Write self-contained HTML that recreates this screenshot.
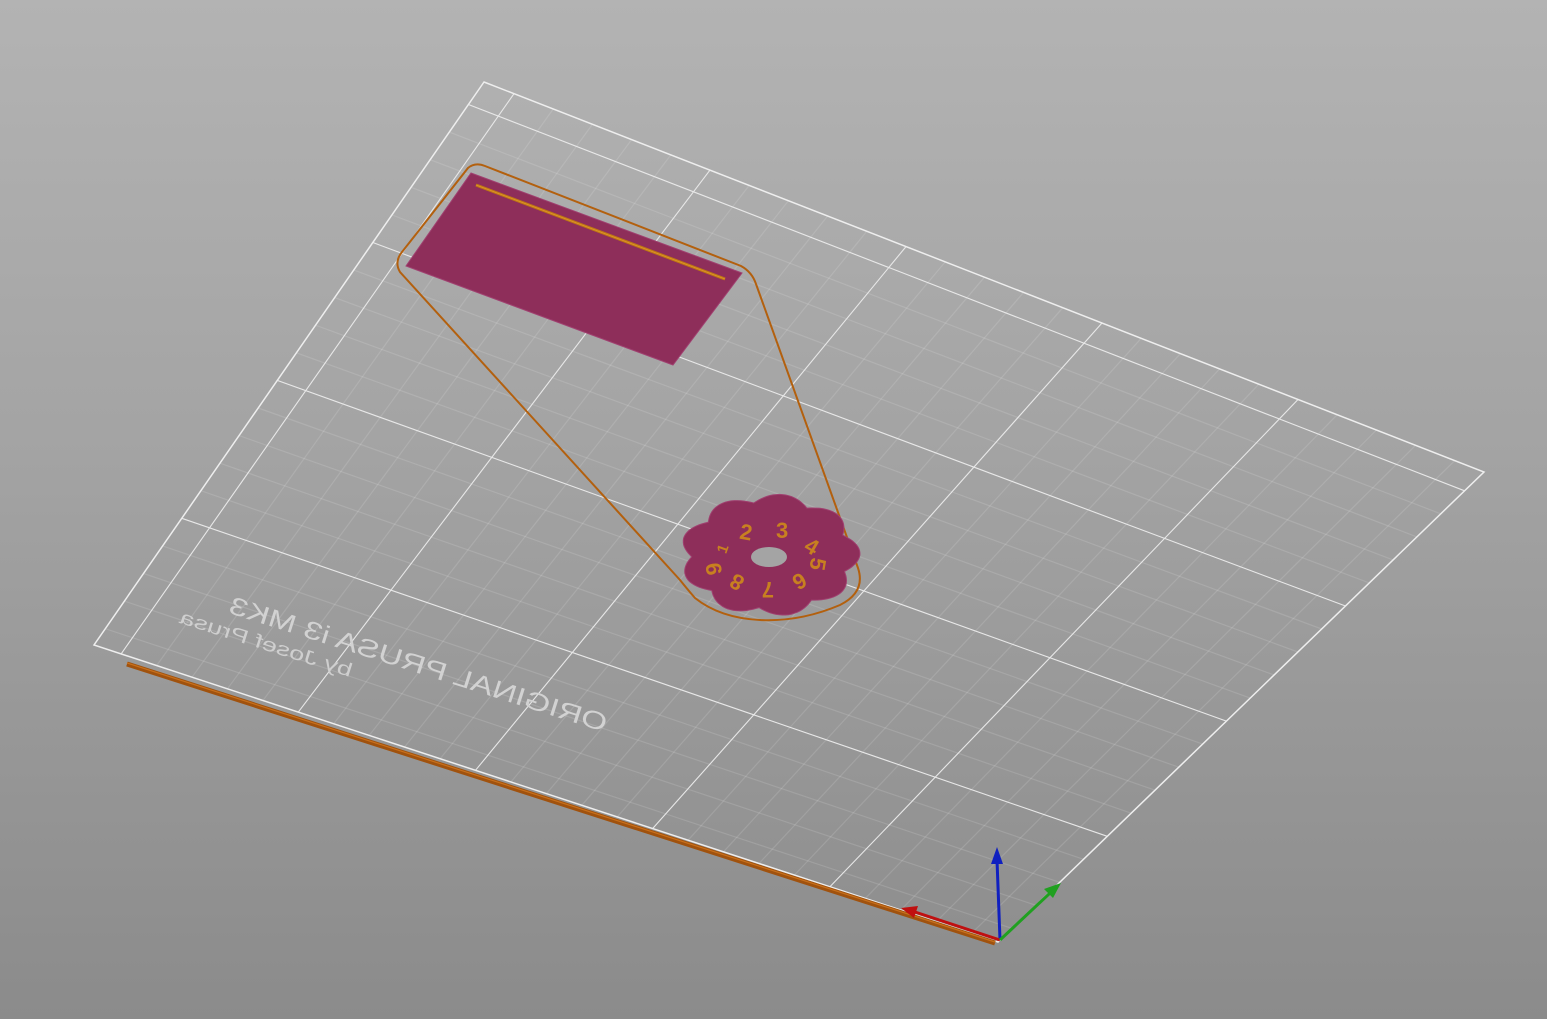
<!DOCTYPE html>
<html><head><meta charset="utf-8">
<style>
html,body{margin:0;padding:0;width:1547px;height:1019px;overflow:hidden;}
body{background:linear-gradient(#b3b3b3 0%,#a3a3a3 45%,#8b8b8b 100%);}
svg{position:absolute;left:0;top:0;}
</style></head>
<body>
<svg id="s" width="1547" height="1019" viewBox="0 0 1547 1019" xmlns="http://www.w3.org/2000/svg">
<g id="grid"></g>
<g id="major"></g>
<polygon points="484,82 1484,472 998,942 94,645" fill="none" stroke="#eeeeee" stroke-width="1.5"/>
<g transform="translate(604,732) rotate(17.6) scale(-1,1)" fill="#d2d2d2" font-family="Liberation Sans, sans-serif">
<text x="0" y="0" font-size="25" textLength="395" lengthAdjust="spacingAndGlyphs">ORIGINAL PRUSA i3  MK3</text>
</g>
<g transform="translate(350,677) rotate(17.6) scale(-1,1)" fill="#cfcfcf" font-family="Liberation Sans, sans-serif">
<text x="0" y="0" font-size="19" textLength="180" lengthAdjust="spacingAndGlyphs">by Josef Prusa</text>
</g>
<line x1="127" y1="664" x2="995" y2="943" stroke="#a0520e" stroke-width="5"/>
<line x1="127" y1="663" x2="995" y2="942" stroke="#c8701c" stroke-width="1.2"/>
<path d="M468,168 Q475,162 485,166 L741,266 Q752,272 756,284 L858,568 Q866,592 840,605 Q800,622 760,620 Q720,618 695,598 Q688,590 680,580 L400,272 Q394,262 402,252 Z" fill="none" stroke="#b3600e" stroke-width="2"/>
<polygon points="471,173 742,273 673,365 406,266" fill="#8e2e5a"/>
<polygon points="471,173 742,273 673,365 406,266" fill="none" stroke="#a04070" stroke-width="1"/>
<line x1="476" y1="185" x2="725" y2="279" stroke="#c07a10" stroke-width="3"/>
<line x1="476" y1="185" x2="725" y2="279" stroke="#e09030" stroke-width="0.8"/>
<g id="gear"></g>
<ellipse cx="769" cy="557" rx="18" ry="10" fill="#a4a4a4"/>
<g fill="#c88020" font-family="Liberation Sans, sans-serif" font-weight="bold" font-size="22">
<text x="740" y="540" transform="rotate(10 748 532)">2</text>
<text x="776" y="538">3</text>
<text x="806" y="554" transform="rotate(30 812 546)">4</text>
<text x="810" y="574" transform="rotate(100 818 566)">5</text>
<text x="792" y="590" transform="rotate(150 799 582)">6</text>
<text x="760" y="598" transform="rotate(180 767 590)">7</text>
<text x="729" y="590" transform="rotate(210 736 582)">8</text>
<text x="706" y="574" transform="rotate(260 714 567)">9</text>
<text x="718" y="553" font-size="15" transform="rotate(-70 723 548)">1</text>
</g>
<line x1="1000" y1="940" x2="997" y2="860" stroke="#1020c0" stroke-width="3"/>
<polygon points="997,847 991,864 1003,864" fill="#1020c0"/>
<line x1="1000" y1="940" x2="915" y2="912" stroke="#c01010" stroke-width="3"/>
<polygon points="901,908 918,906 914,918" fill="#c01010"/>
<line x1="1000" y1="940" x2="1050" y2="893" stroke="#20a020" stroke-width="3"/>
<polygon points="1061,883 1044,889 1053,898" fill="#20a020"/>
</svg>
<script>
(function(){
var A=[484,82],B=[1484,472],C=[998,942],D=[94,645];
function P(u,v){
 var x1=A[0]+(B[0]-A[0])*u, y1=A[1]+(B[1]-A[1])*u;
 var x2=D[0]+(C[0]-D[0])*u, y2=D[1]+(C[1]-D[1])*u;
 return [x1+(x2-x1)*v, y1+(y2-y1)*v];
}
var g=document.getElementById('grid'),m=document.getElementById('major'),s='',t='';
function L(p,q){return '<line x1="'+p[0].toFixed(1)+'" y1="'+p[1].toFixed(1)+'" x2="'+q[0].toFixed(1)+'" y2="'+q[1].toFixed(1)+'"/>';}
for(var i=0;i<=25;i++){var u=0.03+i*0.0392;if(u>0.999)break;
 var l=L(P(u,0),P(u,1)); if(i%5==0)t+=l;else s+=l;}
for(var j=0;j<=20;j++){var v=0.04+j*0.049;if(v>0.999)break;
 var l=L(P(0,v),P(1,v)); if(j%5==0)t+=l;else s+=l;}
g.setAttribute('stroke','#ffffff');g.setAttribute('stroke-opacity','0.13');g.setAttribute('stroke-width','1.2');g.innerHTML=s;
m.setAttribute('stroke','#e8e8e8');m.setAttribute('stroke-width','1.1');m.innerHTML=t;
var cx=770,cy=555,pts=[];
for(var k=0;k<=360;k+=2){var a=k*Math.PI/180;var f=(1+Math.cos(9*a+0.3))/2;var r=0.87+0.13*Math.sqrt(f);
 pts.push((cx+90*r*Math.cos(a)).toFixed(1)+','+(cy+61*r*Math.sin(a)).toFixed(1));}
document.getElementById('gear').innerHTML='<polygon points="'+pts.join(' ')+'" fill="#8e2e5a" stroke="#a04070" stroke-width="1"/>';
})();
</script>
</body></html>
